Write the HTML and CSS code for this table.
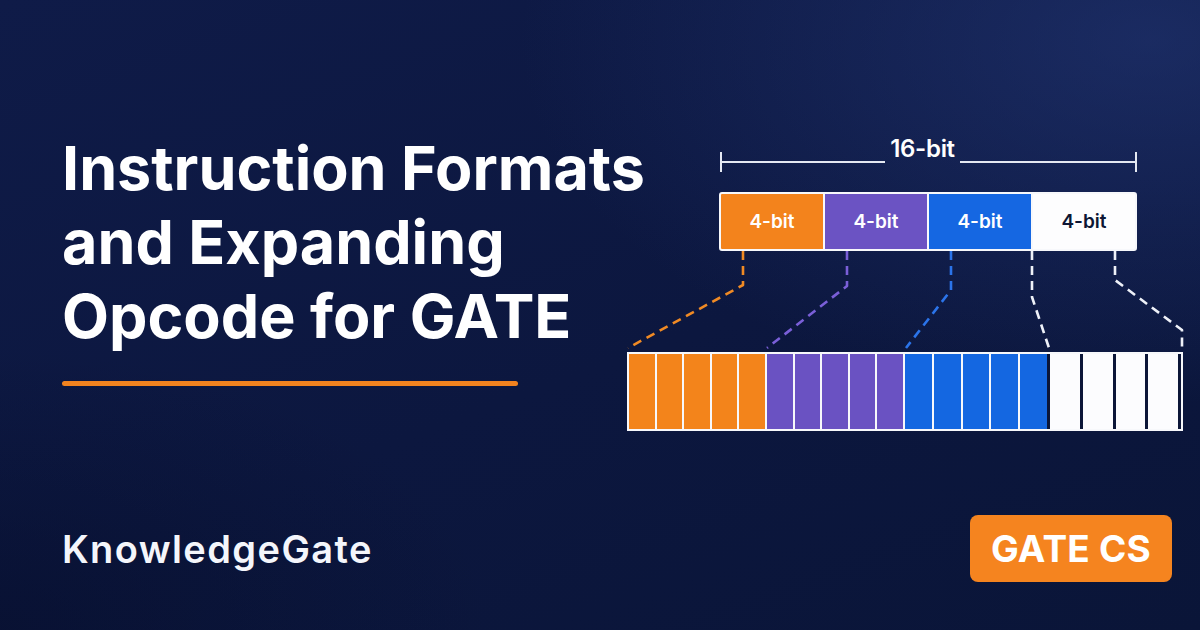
FILE: index.html
```html
<!DOCTYPE html>
<html lang="en">
<head>
<meta charset="utf-8">
<title>Instruction Formats and Expanding Opcode for GATE</title>
<link rel="stylesheet" href="styles.css">
</head>
<body>
<div class="page">
  <section class="intro">
    <h1 class="title">Instruction Formats<br>and Expanding<br>Opcode for GATE</h1>
    <div class="accent"></div>
  </section>

  <section class="diagram">
    <div class="span-row">
      <span class="tick"></span>
      <span class="span-line left"></span>
      <span class="span-label">16-bit</span>
      <span class="span-line right"></span>
      <span class="tick"></span>
    </div>

    <div class="fields">
      <div class="field orange">4-bit</div>
      <div class="field purple">4-bit</div>
      <div class="field blue">4-bit</div>
      <div class="field white">4-bit</div>
    </div>

    <svg class="connectors" width="564" height="101" viewBox="0 0 564 101">
      <g fill="none" stroke-width="2.6" stroke-dasharray="9 6" stroke-linejoin="round">
        <path d="M123 0 V34 L8 97" stroke="#f08a24"/>
        <path d="M227 0 V35 L147 97" stroke="#7a5fd8"/>
        <path d="M331 0 V39 L286 97" stroke="#2b74ea"/>
        <path d="M412 0 V46 L429 97" stroke="#eef1f8"/>
        <path d="M495 0 V29 L562 79 V97" stroke="#eef1f8"/>
      </g>
    </svg>

    <div class="bits">
      <div class="group orange"><i></i><i></i><i></i><i></i><i></i></div>
      <div class="group purple"><i></i><i></i><i></i><i></i><i></i></div>
      <div class="group blue"><i></i><i></i><i></i><i></i><i></i></div>
      <div class="group white"><i></i><i></i><i></i><i></i></div>
    </div>
  </section>

  <footer class="footer">
    <div class="brand">KnowledgeGate</div>
    <div class="badge">GATE CS</div>
  </footer>
</div>
</body>
</html>
```

FILE: styles.css
```css
* { box-sizing: border-box; }

html, body {
  margin: 0;
  padding: 0;
}

body {
  width: 1200px;
  height: 630px;
  overflow: hidden;
  font-family: "Inter", "Liberation Sans", sans-serif;
  color: #ffffff;
  background: #0c1740;
}

.page {
  width: 1200px;
  height: 630px;
  padding: 131px 16px 48px 62px;
  display: grid;
  grid-template-columns: 558px 564px;
  grid-template-rows: 1fr auto;
  background:
    radial-gradient(ellipse 900px 520px at 1150px 40px, rgba(40, 62, 130, 0.5), rgba(40, 62, 130, 0) 70%),
    radial-gradient(ellipse 700px 400px at 0px 630px, rgba(5, 12, 40, 0.5), rgba(5, 12, 40, 0) 70%),
    linear-gradient(160deg, #0f1b48 0%, #0c173f 55%, #0a1538 100%);
}

/* ---------- left column ---------- */
.intro {
  display: flex;
  flex-direction: column;
}

.title {
  margin: 0;
  font-size: 61px;
  line-height: 74px;
  font-weight: 700;
  letter-spacing: 0;
  color: #ffffff;
  white-space: nowrap;
}

.accent {
  margin-top: 28px;
  width: 456px;
  height: 5px;
  border-radius: 3px;
  background: #f2831f;
}

/* ---------- diagram ---------- */
.diagram {
  display: flex;
  flex-direction: column;
  padding-top: 3px;
}

.span-row {
  margin-left: 100px;
  width: 417px;
  height: 56px;
  display: flex;
  align-items: center;
}

.tick {
  width: 2px;
  height: 20px;
  background: #e4e8f2;
}

.span-line {
  height: 2px;
  background: #e4e8f2;
}

.span-line.left { flex: 163 1 0; }
.span-line.right { flex: 175 1 0; }

.span-label {
  align-self: flex-start;
  padding: 0 5px;
  font-size: 24px;
  line-height: 29px;
  font-weight: 600;
  color: #ffffff;
  letter-spacing: -0.3px;
}

.fields {
  margin-top: 2px;
  margin-left: 99px;
  width: 418px;
  height: 59px;
  border: 2px solid #f7f8fb;
  border-radius: 3px;
  background: #f7f8fb;
  display: grid;
  grid-template-columns: repeat(4, 1fr);
  gap: 2px;
  overflow: hidden;
}

.field {
  display: flex;
  align-items: center;
  justify-content: center;
  font-size: 19px;
  font-weight: 600;
  color: #ffffff;
}

.field.orange { background: #f3831c; }
.field.purple { background: #6b53c3; }
.field.blue { background: #1567e2; }
.field.white { background: #fdfdfe; color: #0d1634; }

.connectors {
  display: block;
}

.bits {
  margin-left: 7px;
  width: 556px;
  height: 79px;
  border: 2px solid #f7f8fb;
  background: #f7f8fb;
  display: flex;
  gap: 2px;
}

.group {
  display: flex;
  gap: 2px;
}

.group.orange { flex: 0 0 136px; }
.group.purple { flex: 0 0 136px; }
.group.blue { flex: 0 0 142px; }

.group i {
  flex: 1;
  display: block;
}

.group.orange i { background: #f3841b; }
.group.purple i { background: #6a52c2; }
.group.blue i { background: #1467e1; }

.group.white {
  flex: 1 1 0;
  margin-left: -2px;
  gap: 0;
  border-right: 3px solid #0c1638;
}

.group.white i {
  background: #fcfcfe;
  border-left: 3px solid #0c1638;
}

/* ---------- footer ---------- */
.footer {
  grid-column: 1 / -1;
  display: flex;
  align-items: center;
  justify-content: space-between;
}

.brand {
  font-size: 38px;
  font-weight: 600;
  letter-spacing: 1.4px;
  color: #f4f6fb;
}

.badge {
  margin-right: 12px;
  width: 202px;
  height: 67px;
  border-radius: 8px;
  background: #f5841f;
  display: flex;
  align-items: center;
  justify-content: center;
  font-size: 37px;
  font-weight: 700;
  color: #ffffff;
  letter-spacing: 0.2px;
}
```
